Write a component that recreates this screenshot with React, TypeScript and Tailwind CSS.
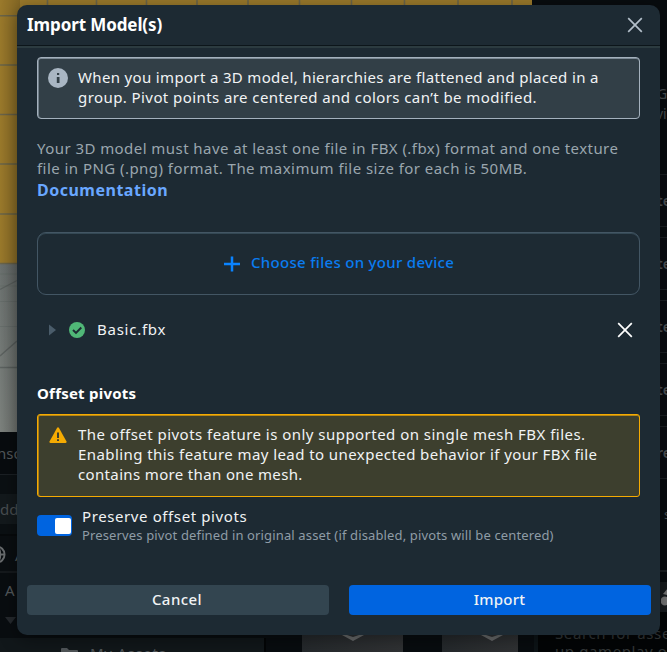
import React from "react";

function Scene() {
  return (
    <svg className="block h-[432px] w-[532px] shrink-0" viewBox="0 0 532 432">
      <defs>
        <linearGradient id="shade" x1="0" x2="1" y1="0" y2="0">
          <stop offset="0" stopColor="#000" stopOpacity="0" />
          <stop offset="1" stopColor="#000" stopOpacity="0.14" />
        </linearGradient>
        <linearGradient id="floor" x1="0" x2="0" y1="0" y2="1">
          <stop offset="0" stopColor="#6b716f" />
          <stop offset="1" stopColor="#7c817d" />
        </linearGradient>
      </defs>
      <rect width="532" height="264" fill="#9a792b" />
      <rect y="264" width="532" height="168" fill="url(#floor)" />
      <g stroke="#6b6549" strokeWidth="1.6">
        <path d="M47.500 0V5M96.500 0V5M146.500 0V5M197 0V5M248 0V5M299.500 0V5M351.500 0V5M404.500 0V5M458 0V5M512 0V5" />
        <path d="M0 15.700H17M0 65H17M0 114.500H17M0 164H17M0 214H17M0 263.500H17" />
      </g>
      <g stroke="#5d6361" fill="none">
        <path d="M0 274H17M0 286H17M0 301.500H17M0 326.500H17" strokeOpacity="0.4" />
        <path d="M0 289.500L17 280.500M0 356L17 341M0 367.500H17" strokeWidth="1.4" />
      </g>
      <rect width="20" height="432" fill="url(#shade)" />
    </svg>
  );
}

function LeftPanel() {
  return (
    <div className="flex h-[206px] w-[532px] flex-col overflow-hidden text-[15px] leading-5 text-[#53585b]">
      <div className="flex h-[43px] items-center border-b border-[#1b2024] bg-[#080c0f]">
        <span className="-ml-[3px] whitespace-nowrap">nsole</span>
      </div>
      <div className="h-[19px] bg-[#0b1013]" />
      <div className="flex h-[30px] items-center bg-[#13191c] text-[#484d50]">
        <span>ddc</span>
      </div>
      <div className="h-3 border-b-2 border-[#070a0c] bg-[#0b1013]" />
      <div className="flex h-[37px] items-center gap-[9px] border-b-2 border-[#15191c] bg-[#0a0e11] pt-[2px]">
        <svg className="-ml-[13px] size-[19px] shrink-0" viewBox="0 0 20 20" fill="none" stroke="#686b6d" strokeWidth="2">
          <circle cx="10" cy="10" r="8.500" />
          <ellipse cx="10" cy="10" rx="4" ry="8.500" />
          <path d="M2 10H18" />
        </svg>
        <span>A</span>
      </div>
      <div className="flex grow flex-col bg-[#090d10] pl-[5px] pt-[7px]">
        <span>A</span>
        <svg className="mt-[17px] h-[7px] w-[11px] shrink-0" viewBox="0 0 11 7"><path d="M0 0H11L5.500 7Z" fill="#25292d" /></svg>
      </div>
    </div>
  );
}

function Tile({ className }: { className: string }) {
  return (
    <div className={`flex h-5 items-start justify-center bg-gradient-to-r from-[#25292c] to-[#303234] ${className}`}>
      <svg className="h-1.5 w-[26px]" viewBox="0 0 26 6"><path d="M2 0H7L13 2L19 0H24L13 6Z" fill="#696b6c" /></svg>
    </div>
  );
}

function AssetShelf() {
  return (
    <div className="flex h-[14px] w-[532px] items-start overflow-visible bg-[#080c0f]">
      <div className="flex h-[14px] w-[266px] items-start gap-3 overflow-hidden border-r-2 border-[#030506] bg-[#11171a] pl-[61px] text-[15px] leading-5 text-[#515659]">
        <svg className="mt-[10px] h-4 w-[17px]" viewBox="0 0 17 16"><path d="M0 1Q0 0 1 0H6L8 2H16Q17 2 17 3V16H0Z" fill="#505558" /></svg>
        <span className="mt-[5px] whitespace-nowrap tracking-[0.700px]">My Assets</span>
      </div>
      <div className="-mt-[3px] ml-9 flex gap-[39px]">
        <Tile className="w-[101px]" />
        <Tile className="w-[76px] pl-[23px]" />
      </div>
    </div>
  );
}

function SideRow({ children, className }: { children?: React.ReactNode; className?: string }) {
  return (
    <div className={`mb-[10px] flex h-[53px] shrink-0 items-center border-y border-[#1c2024] bg-[#0a0d11] pl-[125px] text-[14px] font-semibold text-[#4f5356] ${className ?? ""}`}>
      {children}
    </div>
  );
}

function RightPanel() {
  return (
    <div className="flex h-[652px] w-[135px] shrink-0 flex-col overflow-hidden bg-[#080c0f] text-[#4b5053]">
      <div className="h-[174px] shrink-0 pl-[125px] pt-[84px] text-[14px] leading-5">
        <p className="whitespace-nowrap">Gi</p>
        <p className="-ml-[1px] whitespace-nowrap">ving</p>
      </div>
      <SideRow>te</SideRow>
      <SideRow>te</SideRow>
      <SideRow>te</SideRow>
      <SideRow>te</SideRow>
      <SideRow className="h-[43px]">re</SideRow>
      <div className="h-[81px] shrink-0 pl-[132px] pt-4 text-[13px]">s</div>
      <div className="h-3 shrink-0 border-t-2 border-[#1b1f22]" />
      <div className="flex h-[30px] shrink-0 items-center bg-[#171b1e] pl-[129px]">
        <svg className="h-[18px] w-4 shrink-0" viewBox="0 0 16 18"><path d="M2 6L7 0H11L6 7Z" fill="#777" /><circle cx="4" cy="13" r="4.500" fill="#777" /></svg>
      </div>
      <div className="ml-[2px] grow border-l-4 border-[#0d1417] bg-[#030506] pl-[17px] pt-[12px] text-[15px] leading-[18px] tracking-[0.600px] text-[#343839]">
        <p className="whitespace-nowrap">Search for assets</p>
        <p className="whitespace-nowrap">up gameplay or</p>
      </div>
    </div>
  );
}

function Cross({ color }: { color: string }) {
  return (
    <svg className="size-4" viewBox="0 0 16 16" fill="none" stroke={color} strokeWidth="1.700">
      <path d="M1.200 1.200L14.800 14.800M14.800 1.200L1.200 14.800" />
    </svg>
  );
}

function Dialog() {
  return (
    <div className="absolute left-[17px] top-[5px] flex h-[630px] w-[643px] flex-col rounded-[10px] bg-[#1d2a33] text-[15px] leading-[19.700px] text-[#f1f3f4] shadow-[0_4px_18px_rgba(0,0,0,0.400)]">
      <header className="flex h-[41px] shrink-0 items-center justify-between border-b border-[#0c151a] pl-[10px] pr-[17px]">
        <h1 className="-mt-[1px] text-[17px] font-bold leading-6 tracking-[-0.100px] text-white">Import Model(s)</h1>
        <button className="-mt-[1px]"><Cross color="#b3bfca" /></button>
      </header>
      <div className="h-[2px] shrink-0 bg-[#2c3b40]" />

      <main className="flex flex-col px-5 pt-[9px]">
        <section className="flex h-[62px] gap-[10px] rounded-[4px] border border-[#a4b1bd] bg-[#323f47] pl-[10px] pt-[10px] shadow-[inset_0_1px_0_#7b8995,inset_1px_0_0_#6f7d88]">
          <svg className="size-5 shrink-0" viewBox="0 0 20 20">
            <circle cx="10" cy="10" r="10" fill="#a9b6c3" />
            <path d="M9 5H11.200V7.100H9ZM8.800 9H11.500V15H8.800Z" fill="#323f47" />
          </svg>
          <p className="whitespace-nowrap">
            <span className="block tracking-[0.340px]">When you import a 3D model, hierarchies are flattened and placed in a</span>
            <span className="block tracking-[0.420px]">group. Pivot points are centered and colors can’t be modified.</span>
          </p>
        </section>

        <p className="mt-[20px] whitespace-nowrap text-[#9aa6ae]">
          <span className="block tracking-[0.440px]">Your 3D model must have at least one file in FBX (.fbx) format and one texture</span>
          <span className="block tracking-[0.450px]">file in PNG (.png) format. The maximum file size for each is 50MB.</span>
          <a className="mt-[1px] block text-[16px] font-bold leading-[22px] tracking-[0.500px] text-[#69a7ff]">Documentation</a>
        </p>

        <button className="mt-[31px] flex h-[63px] items-center rounded-[9px] border border-[#435664] pl-[186px] text-[#0a7cf0] shadow-[inset_0_1px_0_#344854]">
          <svg className="size-4" viewBox="0 0 16 16" stroke="#0a83ff" strokeWidth="2.500"><path d="M0 8H16M8 0.500V15.500" /></svg>
          <span className="-mt-[2px] ml-[11px] font-medium tracking-[0.300px]">Choose files on your device</span>
        </button>

        <div className="mt-[25px] flex h-5 items-center pl-[12px] pr-[7px]">
          <svg className="h-3 w-[7px]" viewBox="0 0 7 12"><path d="M0 0.500L7 6L0 11.500Z" fill="#4a5c6a" /></svg>
          <svg className="ml-[13px] size-4" viewBox="0 0 16 16" fill="none">
            <circle cx="8" cy="8" r="8" fill="#50b777" />
            <path d="M4 8L7 11L12.300 5.500" stroke="#1d2a33" strokeWidth="1.900" />
          </svg>
          <span className="-mt-[2px] ml-3 tracking-[0.750px]">Basic.fbx</span>
          <button className="ml-auto"><Cross color="#ffffff" /></button>
        </div>

        <h2 className="mt-[44px] font-bold tracking-[0.230px] text-white">Offset pivots</h2>
        <section className="mt-[10px] flex h-[83px] gap-[11px] rounded-[3px] border border-[#f5ab02] bg-[#3d3f2e] pl-[11px] pt-[10px] shadow-[inset_0_1px_0_#b98712,inset_1px_0_0_#a97c16]">
          <svg className="mt-[2px] h-4 w-[18px] shrink-0" viewBox="0 0 18 16">
            <path d="M9 0.300Q9.600 0.300 10 1L17.500 14.500Q17.900 15.800 16.600 16H1.400Q0.100 15.800 0.500 14.500L8 1Q8.400 0.300 9 0.300Z" fill="#f5ab02" />
            <path d="M8 5.500H10V11H8ZM8 12.300H10V14.100H8Z" fill="#3d3f2e" />
          </svg>
          <p className="whitespace-nowrap">
            <span className="block tracking-[0.470px]">The offset pivots feature is only supported on single mesh FBX files.</span>
            <span className="block tracking-[0.430px]">Enabling this feature may lead to unexpected behavior if your FBX file</span>
            <span className="block tracking-[0.350px]">contains more than one mesh.</span>
          </p>
        </section>

        <div className="mt-[9px] flex items-start gap-[10px]">
          <div className="mt-[9px] flex h-[21px] w-[35px] shrink-0 items-center justify-end rounded-[4px] bg-[#0064e0] pr-[1px]">
            <div className="size-4 rounded-[2px] bg-white" />
          </div>
          <div className="whitespace-nowrap">
            <p className="leading-5 tracking-[0.600px]">Preserve offset pivots</p>
            <p className="text-[13px] leading-[18px] tracking-[0.140px] text-[#8f9ca6]">Preserves pivot defined in original asset (if disabled, pivots will be centered)</p>
          </div>
        </div>
      </main>

      <footer className="mb-5 mt-auto flex gap-5 pl-[10px] pr-[9px]">
        <button className="h-[30px] w-[302px] rounded-[4px] bg-[#334550] pr-[2px] font-medium tracking-[0.450px]">Cancel</button>
        <button className="h-[30px] w-[302px] rounded-[4px] bg-[#0064e0] pr-[1px] font-medium tracking-[0.200px]">Import</button>
      </footer>
    </div>
  );
}

export default function App() {
  return (
    <div className="relative flex h-[652px] w-[667px] overflow-hidden bg-[#080c0f] font-['Noto_Sans',sans-serif]">
      <div className="flex w-[532px] shrink-0 flex-col">
        <Scene />
        <LeftPanel />
        <AssetShelf />
      </div>
      <RightPanel />
      <Dialog />
    </div>
  );
}
